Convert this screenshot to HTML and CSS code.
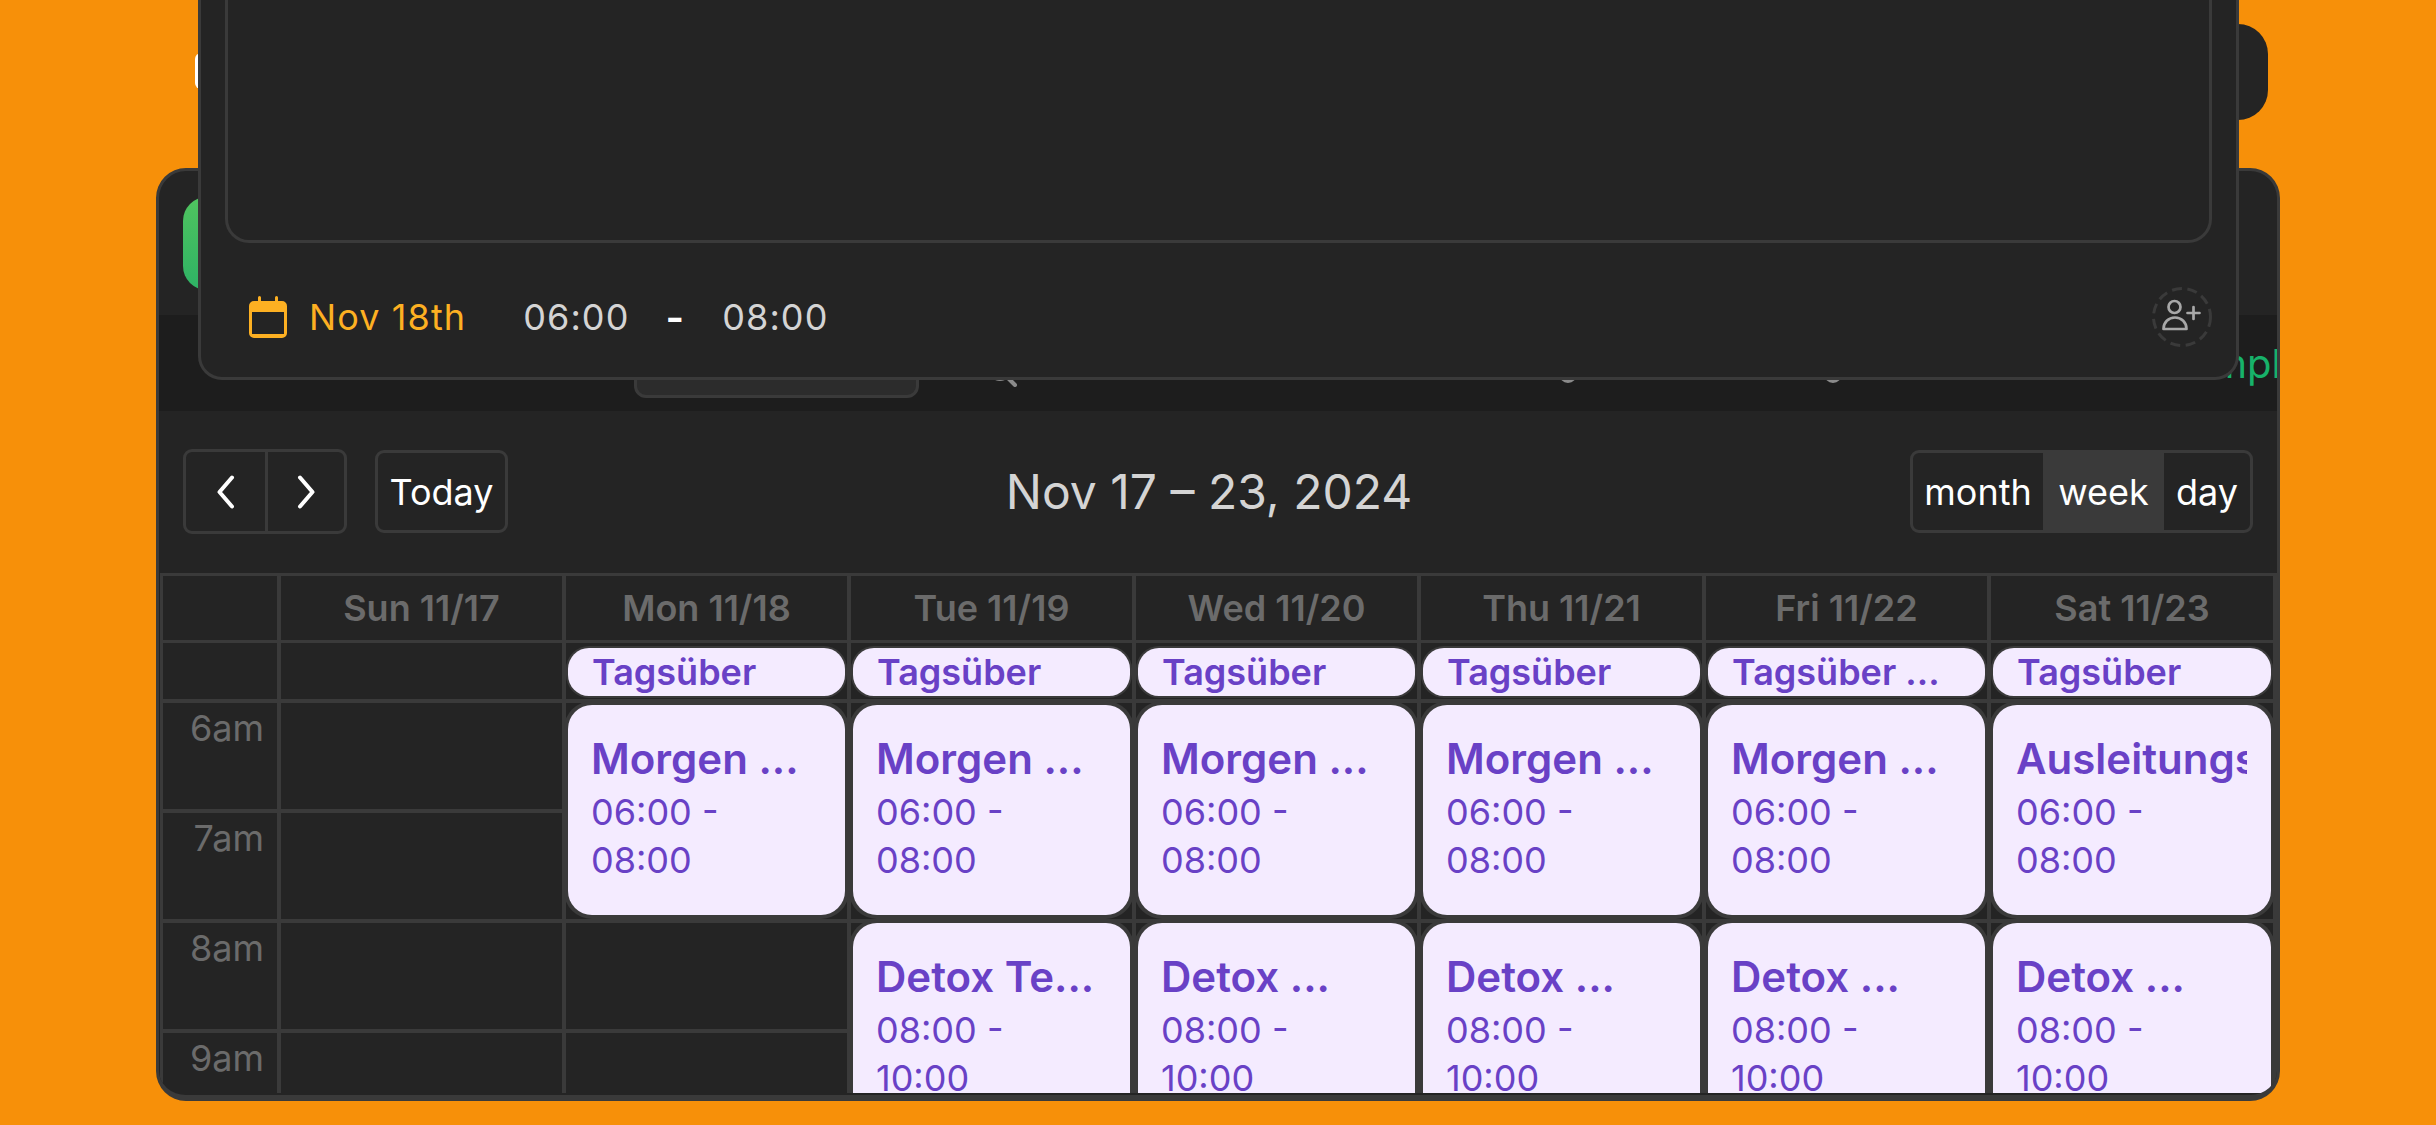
FILE: index.html
```html
<!DOCTYPE html>
<html lang="de">
<head>
  <meta charset="UTF-8">
  <title>Kalender</title>
  <link rel="stylesheet" href="styles.css">
</head>
<body>

  <!-- top bar, mostly behind the dialog -->
  <div class="topbar"><span class="topbar-logo"></span></div>

  <div class="app-card">
    <div class="app-head"><span class="app-logo"></span></div>

    <nav class="tabs">
      <span class="tab active"></span>
      <svg class="tab-search" width="40" height="36" viewBox="0 0 40 36" fill="none" stroke="#8a8a8a" stroke-width="4" stroke-linecap="round"><circle cx="19" cy="19" r="9"/><path d="M26 26l8 8"/></svg>
      <span class="tab-dot first"></span>
      <span class="tab-dot"></span>
      <span class="tab-green">Templates</span>
    </nav>

    <div class="toolbar">
      <div class="toolbar-left">
        <div class="btn-group">
          <button class="btn btn-icon"><svg width="20" height="34" viewBox="0 0 20 34" fill="none" stroke="#fff" stroke-width="4" stroke-linecap="round" stroke-linejoin="round"><path d="M16 2.500L3.500 17 16 31.500"/></svg></button>
          <button class="btn btn-icon"><svg width="20" height="34" viewBox="0 0 20 34" fill="none" stroke="#fff" stroke-width="4" stroke-linecap="round" stroke-linejoin="round"><path d="M4 2.500L16.500 17 4 31.500"/></svg></button>
        </div>
        <button class="btn btn-today">Today</button>
      </div>
      <h2 class="cal-title">Nov 17 – 23, 2024</h2>
      <div class="btn-group view-group">
        <button class="btn btn-view btn-month">month</button>
        <button class="btn btn-view btn-week">week</button>
        <button class="btn btn-view btn-day">day</button>
      </div>
    </div>

    <div class="cal">
      <div class="cal-head"></div>
      <div class="cal-head">Sun 11/17</div>
      <div class="cal-head">Mon 11/18</div>
      <div class="cal-head">Tue 11/19</div>
      <div class="cal-head">Wed 11/20</div>
      <div class="cal-head">Thu 11/21</div>
      <div class="cal-head">Fri 11/22</div>
      <div class="cal-head">Sat 11/23</div>

      <div class="cal-allday"></div>
      <div class="cal-allday"></div>
      <div class="cal-allday"><div class="allday-ev">Tagsüber</div></div>
      <div class="cal-allday"><div class="allday-ev">Tagsüber</div></div>
      <div class="cal-allday"><div class="allday-ev">Tagsüber</div></div>
      <div class="cal-allday"><div class="allday-ev">Tagsüber</div></div>
      <div class="cal-allday"><div class="allday-ev">Tagsüber ...</div></div>
      <div class="cal-allday"><div class="allday-ev">Tagsüber</div></div>

      <div class="slot-label row-6">6am</div>
      <div class="slot-label row-7">7am</div>
      <div class="slot-label row-8">8am</div>
      <div class="slot-label row-9">9am</div>

      <div class="slot col-sun row-6"></div><div class="slot col-sun row-7"></div><div class="slot col-sun row-8"></div><div class="slot col-sun row-9"></div>
      <div class="slot col-mon row-6"></div><div class="slot col-mon row-7"></div><div class="slot col-mon row-8"></div><div class="slot col-mon row-9"></div>
      <div class="slot col-tue row-6"></div><div class="slot col-tue row-7"></div><div class="slot col-tue row-8"></div><div class="slot col-tue row-9"></div>
      <div class="slot col-wed row-6"></div><div class="slot col-wed row-7"></div><div class="slot col-wed row-8"></div><div class="slot col-wed row-9"></div>
      <div class="slot col-thu row-6"></div><div class="slot col-thu row-7"></div><div class="slot col-thu row-8"></div><div class="slot col-thu row-9"></div>
      <div class="slot col-fri row-6"></div><div class="slot col-fri row-7"></div><div class="slot col-fri row-8"></div><div class="slot col-fri row-9"></div>
      <div class="slot col-sat row-6"></div><div class="slot col-sat row-7"></div><div class="slot col-sat row-8"></div><div class="slot col-sat row-9"></div>

      <div class="ev col-mon row-6 two"><strong>Morgen ...</strong><span>06:00 -<br>08:00</span></div>
      <div class="ev col-tue row-6 two"><strong>Morgen ...</strong><span>06:00 -<br>08:00</span></div>
      <div class="ev col-wed row-6 two"><strong>Morgen ...</strong><span>06:00 -<br>08:00</span></div>
      <div class="ev col-thu row-6 two"><strong>Morgen ...</strong><span>06:00 -<br>08:00</span></div>
      <div class="ev col-fri row-6 two"><strong>Morgen ...</strong><span>06:00 -<br>08:00</span></div>
      <div class="ev col-sat row-6 two"><strong>Ausleitungstee</strong><span>06:00 -<br>08:00</span></div>

      <div class="ev col-tue row-8 two"><strong>Detox Te...</strong><span>08:00 -<br>10:00</span></div>
      <div class="ev col-wed row-8 two"><strong>Detox ...</strong><span>08:00 -<br>10:00</span></div>
      <div class="ev col-thu row-8 two"><strong>Detox ...</strong><span>08:00 -<br>10:00</span></div>
      <div class="ev col-fri row-8 two"><strong>Detox ...</strong><span>08:00 -<br>10:00</span></div>
      <div class="ev col-sat row-8 two"><strong>Detox ...</strong><span>08:00 -<br>10:00</span></div>
    </div>
  </div>

  <!-- dialog on top of the calendar -->
  <div class="dialog">
    <div class="dialog-body"></div>
    <div class="dialog-foot">
      <svg class="cal-icon" width="38" height="42" viewBox="0 0 38 42"><path fill="#fdb022" d="M10.500 0a1.500 1.500 0 0 1 1.500 1.500V5h14V1.500a1.500 1.500 0 0 1 3 0V5h4a5 5 0 0 1 5 5v27a5 5 0 0 1-5 5H5a5 5 0 0 1-5-5V10a5 5 0 0 1 5-5h4V1.500A1.500 1.500 0 0 1 10.500 0z"/><rect x="3" y="16" width="32" height="22" fill="#242424"/></svg>
      <span class="foot-date">Nov 18th</span>
      <span class="foot-time">06:00</span>
      <span class="foot-dash">-</span>
      <span class="foot-time">08:00</span>
      <svg class="foot-user" width="60" height="60" viewBox="0 0 60 60" fill="none">
        <circle cx="30" cy="30" r="28.500" stroke="#3a3a3a" stroke-width="3" stroke-dasharray="10 5.500"/>
        <g transform="translate(10 12)" stroke="#a8a8a8" stroke-width="2.700" stroke-linecap="round" stroke-linejoin="round">
          <circle cx="12.500" cy="8" r="6"/>
          <path d="M1.500 30c0-6.500 5-11.500 11.500-11.500S24.500 23.500 24.500 30z"/>
          <path d="M31.500 8v12M25.500 14h12"/>
        </g>
      </svg>
    </div>
  </div>

</body>
</html>
```

FILE: styles.css
```css
:root {
  --orange: #f79009;
  --panel: #242424;
  --line: #3a3a3a;
  --muted: #6b6b6b;
  --ev-bg: #f4ebff;
  --ev-text: #6941c6;
}
*, *::before, *::after { box-sizing: border-box; margin: 0; padding: 0; }
html, body { height: 100%; }
body {
  position: relative;
  overflow: hidden;
  background: var(--orange);
  font-family: Inter, "Noto Sans", sans-serif;
  padding: 24px 0 0 156px;
}

/* top bar */
.topbar {
  position: relative;
  width: 2067px;
  margin-left: 45px;
  height: 96px;
  background: var(--panel);
  border-radius: 30px;
}
.topbar-logo {
  position: absolute;
  left: -6px;
  top: 29px;
  width: 40px;
  height: 36px;
  background: #fff;
  border-radius: 6px;
}

/* app card */
.app-card {
  margin-top: 48px;
  width: 2124px;
  height: 933px;
  background: var(--panel);
  border: 3px solid var(--line);
  border-bottom-width: 6px;
  border-radius: 30px;
  overflow: hidden;
}
.app-head { height: 144px; padding: 26px 24px; }
.app-logo {
  display: block;
  width: 93px;
  height: 93px;
  border-radius: 24px;
  background: linear-gradient(#50c45f, #2eb265);
}

.tabs {
  height: 96px;
  background: #1d1d1d;
  display: flex;
  align-items: flex-end;
  padding-left: 475px;
  overflow: hidden;
}
.tab {
  display: block;
  flex: none;
  width: 285px;
  height: 70px;
  margin-bottom: 13px;
  background: #2c2c2c;
  border: 3px solid var(--line);
  border-radius: 12px;
}
.tab-search { flex: none; margin: 0 0 24px 62px; }
.tab-dot {
  flex: none;
  width: 18px;
  height: 18px;
  margin: 0 0 28px 247px;
  border: 3px solid #8a8a8a;
  border-radius: 50%;
}
.tab-dot.first { margin-left: 538px; }
.tab-green {
  flex: none;
  margin: 0 0 23px 324px;
  color: #17b26a;
  font-size: 40px;
  line-height: 48px;
  white-space: nowrap;
}

/* toolbar */
.toolbar {
  height: 162px;
  padding: 38px 24px 0;
  display: flex;
  align-items: flex-start;
  justify-content: space-between;
}
.toolbar-left { display: flex; gap: 28px; width: 325px; }
.btn-group { display: flex; border: 3px solid var(--line); border-radius: 9px; height: 85px; overflow: hidden; }
.btn {
  background: transparent;
  color: #fff;
  border: 0;
  font-family: inherit;
  font-size: 36px;
}
.btn-icon { width: 79px; display: flex; align-items: center; justify-content: center; }
.btn-icon + .btn-icon { border-left: 3px solid var(--line); }
.btn-today {
  width: 133px;
  height: 83px;
  margin-top: 1px;
  border: 3px solid var(--line);
  border-radius: 9px;
}
.cal-title {
  font-size: 48px;
  font-weight: 400;
  color: #d4d4d4;
  line-height: 85px;
}
.view-group { height: 83px; margin-top: 1px; width: 343px; }
.btn-view { height: 100%; }
.btn-month { width: 130px; }
.btn-week { width: 121px; background: var(--line); }
.btn-day { flex: 1; }

/* calendar grid */
.cal {
  margin-left: 1px;
  height: 520px;
  display: grid;
  grid-template-columns: 118px repeat(6, 285px) 1fr;
  grid-template-rows: 67px 60px 110px 110px 110px 110px;
  overflow: hidden;
  border-top: 3px solid var(--line);
  border-left: 3px solid var(--line);
}
.cal-head {
  display: flex;
  align-items: center;
  justify-content: center;
  color: var(--muted);
  font-size: 36px;
  font-weight: 600;
  border-right: 4px solid var(--line);
  border-bottom: 3px solid var(--line);
}
.cal-allday {
  padding: 5px 2px 0;
  border-right: 4px solid var(--line);
  border-bottom: 4px solid var(--line);
}
.allday-ev {
  height: 48px;
  padding-left: 24px;
  background: var(--ev-bg);
  color: var(--ev-text);
  font-size: 36px;
  font-weight: 600;
  line-height: 48px;
  border-radius: 21px;
  box-shadow: 0 0 0 2px var(--line);
  white-space: nowrap;
}

.slot-label, .slot {
  border-right: 4px solid var(--line);
  border-bottom: 4px solid var(--line);
}
.slot-label {
  grid-column: 1;
  color: var(--muted);
  font-size: 36px;
  text-align: right;
  padding: 3px 13px 0 0;
}
.row-6 { grid-row: 3; }
.row-7 { grid-row: 4; }
.row-8 { grid-row: 5; }
.row-9 { grid-row: 6; }
.two { grid-row-end: span 2; }
.col-sun { grid-column: 2; }
.col-mon { grid-column: 3; }
.col-tue { grid-column: 4; }
.col-wed { grid-column: 5; }
.col-thu { grid-column: 6; }
.col-fri { grid-column: 7; }
.col-sat { grid-column: 8; }

.ev {
  margin: 2px 6px 8px 2px;
  padding: 26px 24px 0 23px;
  background: var(--ev-bg);
  color: var(--ev-text);
  border-radius: 24px;
  box-shadow: 0 0 0 4px var(--line);
  overflow: hidden;
  min-width: 0;
}
.ev.row-8 { margin-top: 0; }
.ev strong {
  display: block;
  font-size: 42px;
  font-weight: 600;
  line-height: 55px;
  white-space: nowrap;
  overflow: hidden;
}
.ev span { display: block; font-size: 36px; line-height: 48px; margin-top: 2px; }

/* dialog */
.dialog {
  position: absolute;
  left: 198px;
  top: -60px;
  width: 2041px;
  height: 440px;
  background: var(--panel);
  border: 3px solid var(--line);
  border-radius: 24px;
  padding: 0 24px;
  z-index: 10;
}
.dialog-body {
  height: 300px;
  border: 3px solid var(--line);
  border-top: 0;
  border-radius: 0 0 24px 24px;
}
.dialog-foot {
  display: flex;
  align-items: center;
  height: 134px;
  padding: 14px 0 0 24px;
  letter-spacing: 1.1px;
  font-size: 36px;
}
.cal-icon { flex: none; margin-right: 22px; }
.foot-date { color: #fdb022; margin-right: 57px; }
.foot-time { color: #d4d4d4; }
.foot-dash { color: #fff; margin: 0 37px 0 36px; font-size: 40px; font-weight: 600; }
.foot-user { margin-left: auto; }
```
